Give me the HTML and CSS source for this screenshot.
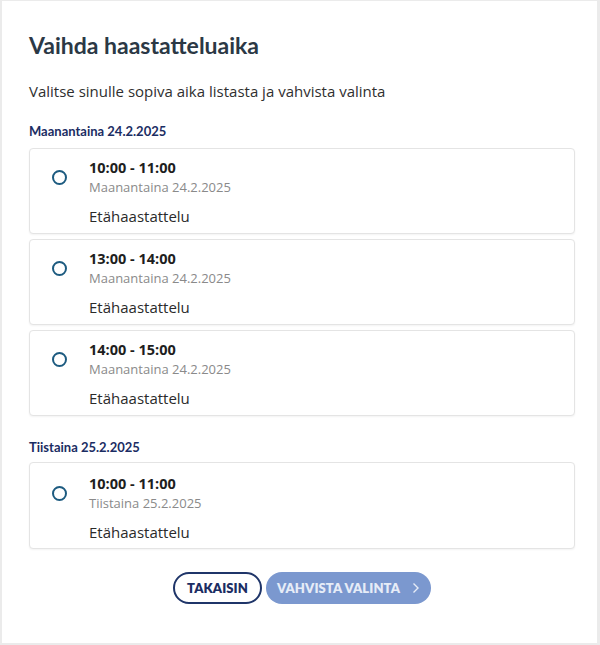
FILE: index.html
```html
<!DOCTYPE html>
<html lang="fi">
<head>
<meta charset="utf-8">
<title>Vaihda haastatteluaika</title>
<link rel="stylesheet" href="styles.css">
</head>
<body>
<div class="dialog">
  <h1 class="title">Vaihda haastatteluaika</h1>
  <p class="intro">Valitse sinulle sopiva aika listasta ja vahvista valinta</p>

  <h2 class="day">Maanantaina 24.2.2025</h2>
  <div class="slots">
    <label class="slot">
      <span class="radio"></span>
      <span class="info">
        <span class="time">10:00 - 11:00</span>
        <span class="date">Maanantaina 24.2.2025</span>
        <span class="type">Etähaastattelu</span>
      </span>
    </label>
    <label class="slot">
      <span class="radio"></span>
      <span class="info">
        <span class="time">13:00 - 14:00</span>
        <span class="date">Maanantaina 24.2.2025</span>
        <span class="type">Etähaastattelu</span>
      </span>
    </label>
    <label class="slot">
      <span class="radio"></span>
      <span class="info">
        <span class="time">14:00 - 15:00</span>
        <span class="date">Maanantaina 24.2.2025</span>
        <span class="type">Etähaastattelu</span>
      </span>
    </label>
  </div>

  <h2 class="day day-second">Tiistaina 25.2.2025</h2>
  <div class="slots">
    <label class="slot slot-last">
      <span class="radio"></span>
      <span class="info">
        <span class="time">10:00 - 11:00</span>
        <span class="date">Tiistaina 25.2.2025</span>
        <span class="type">Etähaastattelu</span>
      </span>
    </label>
  </div>

  <div class="actions">
    <button class="btn btn-back">TAKAISIN</button>
    <button class="btn btn-confirm">VAHVISTA VALINTA
      <svg class="chev" width="8" height="12" viewBox="0 0 8 12"><path d="M1.5 1.5 L6 6 L1.5 10.5" fill="none" stroke="currentColor" stroke-width="1.4"/></svg>
    </button>
  </div>
</div>
</body>
</html>
```
FILE: styles.css
```css
html, body {
  margin: 0;
  padding: 0;
}
body {
  background: #ebebeb;
  height: 645px;
  padding: 1px 3px 2px 2px;
  box-sizing: border-box;
  font-family: "Open Sans", "Noto Sans", sans-serif;
}
.dialog {
  background: #fff;
  height: 100%;
  box-sizing: border-box;
  padding: 29px 22px 0 27px;
}
.title {
  margin: 0;
  font-family: Lato, "Open Sans", sans-serif;
  font-weight: 700;
  font-size: 23px;
  line-height: 30px;
  color: #2b3845;
}
.intro {
  margin: 20px 0 0;
  font-size: 15px;
  line-height: 22px;
  color: #2f2f2f;
}
.day {
  margin: 20px 0 8px;
  font-family: Lato, "Open Sans", sans-serif;
  font-weight: 700;
  font-size: 13px;
  line-height: 18px;
  color: #1b2d63;
}
.day-second {
  margin-top: 22px;
  margin-bottom: 6px;
}
.slots {
  display: flex;
  flex-direction: column;
  gap: 5px;
}
.slot {
  display: flex;
  align-items: flex-start;
  border: 1px solid #e4e4e4;
  border-radius: 4px;
  box-shadow: 0 1px 2px rgba(0,0,0,0.05);
  padding: 9px 10px 7px 22px;
  background: #fff;
}
.slot-last {
  padding-top: 11px;
  padding-bottom: 6px;
}
.radio {
  width: 15px;
  height: 15px;
  box-sizing: border-box;
  border: 2px solid #1d5b80;
  border-radius: 50%;
  margin-top: 12px;
  flex: none;
}
.info {
  display: flex;
  flex-direction: column;
  margin-left: 22px;
}
.time {
  font-weight: 700;
  font-size: 14.5px;
  line-height: 20px;
  color: #1e1e1e;
}
.date {
  font-size: 13px;
  line-height: 18px;
  color: #8a8a8a;
}
.type {
  margin-top: 10px;
  font-size: 15px;
  line-height: 20px;
  color: #2a2a2a;
}
.actions {
  display: flex;
  justify-content: center;
  gap: 4px;
  margin-top: 23px;
}
.btn {
  height: 32px;
  border-radius: 16px;
  font-family: Lato, "Open Sans", sans-serif;
  font-weight: 800;
  font-size: 13px;
  letter-spacing: 0.1px;
  box-sizing: border-box;
  display: flex;
  align-items: center;
  justify-content: center;
  cursor: pointer;
}
.btn-back {
  width: 89px;
  background: #fff;
  border: 2px solid #1f3569;
  color: #1b2d63;
}
.btn-confirm {
  width: 165px;
  background: #7b98cf;
  border: none;
  color: #e6ecf7;
  gap: 12px;
  padding-left: 6px;
}
.chev {
  display: block;
}
```
